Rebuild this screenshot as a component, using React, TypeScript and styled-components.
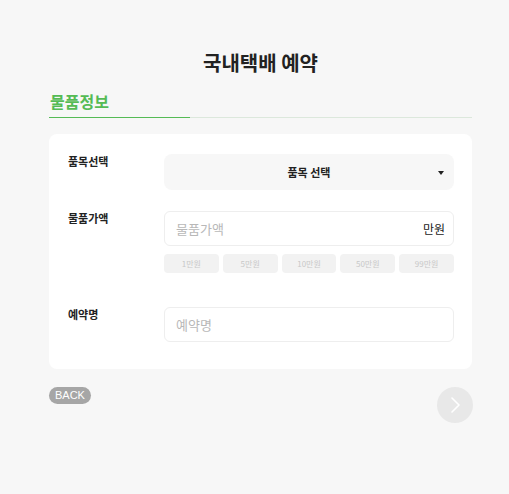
import styled, { createGlobalStyle } from "styled-components";

const GlobalStyle = createGlobalStyle`
    body {
        margin: 0;
        background: #f7f7f7;
        font-family: "Noto Sans CJK KR", "Noto Sans", sans-serif;
        color: #222;
    }
`;

const amounts = ["1만원", "5만원", "10만원", "50만원", "99만원"];

function App() {
    return (
        <>
            <GlobalStyle />
            <Page>
                <Title>국내택배 예약</Title>
                <Tabs>
                    <Tab active>물품정보</Tab>
                    <Tab />
                    <Tab />
                </Tabs>
                <Card>
                    <Row>
                        <Label>품목선택</Label>
                        <Field>
                            <Select>
                                품목 선택
                                <Caret />
                            </Select>
                        </Field>
                    </Row>
                    <Row>
                        <Label>물품가액</Label>
                        <Field>
                            <InputBox>
                                <Placeholder>물품가액</Placeholder>
                                <Unit>만원</Unit>
                            </InputBox>
                            <Chips>
                                {amounts.map((a) => (
                                    <Chip key={a}>{a}</Chip>
                                ))}
                            </Chips>
                        </Field>
                    </Row>
                    <Row spaced>
                        <Label>예약명</Label>
                        <Field>
                            <InputBox>
                                <Placeholder>예약명</Placeholder>
                            </InputBox>
                        </Field>
                    </Row>
                </Card>
                <Footer>
                    <BackButton>BACK</BackButton>
                    <NextButton>
                        <svg width="14" height="18" viewBox="0 0 14 18" fill="none">
                            <path d="M4 2l7 7-7 7" stroke="#fff" strokeWidth="1.6" strokeLinecap="round" strokeLinejoin="round" />
                        </svg>
                    </NextButton>
                </Footer>
            </Page>
        </>
    );
}

const Page = styled.div`
    width: 423px;
    padding: 48px 0 0 49px;
`;

const Title = styled.h1`
    margin: 0;
    text-align: center;
    font-size: 20px;
    font-weight: 700;
    line-height: 30px;
    color: #222;
`;

const Tabs = styled.div`
    display: flex;
    margin-top: 11px;
`;

const Tab = styled.div<{ active?: boolean }>`
    flex: 1;
    height: 28px;
    padding-left: 1px;
    font-size: 16px;
    font-weight: 700;
    line-height: 24px;
    color: #55bb55;
    border-bottom: 1px solid ${({ active }) => (active ? "#55bb55" : "#dce8dc")};
`;

const Card = styled.div`
    margin-top: 16px;
    background: #fff;
    border-radius: 8px;
    padding: 20px 18px 27px 19px;
    display: flex;
    flex-direction: column;
    gap: 21px;
`;

const Row = styled.div<{ spaced?: boolean }>`
    display: flex;
    margin-top: ${({ spaced }) => (spaced ? "13px" : "0")};
`;

const Label = styled.div`
    width: 96px;
    flex-shrink: 0;
    font-size: 11px;
    font-weight: 700;
    line-height: 14px;
    color: #222;
`;

const Field = styled.div`
    flex: 1;
    display: flex;
    flex-direction: column;
    gap: 8px;
`;

const Select = styled.div`
    position: relative;
    height: 36px;
    background: #f7f7f7;
    border-radius: 8px;
    display: flex;
    align-items: center;
    justify-content: center;
    font-size: 11px;
    font-weight: 700;
    color: #222;
`;

const Caret = styled.span`
    position: absolute;
    right: 10px;
    top: 17px;
    border-left: 3.5px solid transparent;
    border-right: 3.5px solid transparent;
    border-top: 4px solid #222;
`;

const InputBox = styled.div`
    height: 35px;
    box-sizing: border-box;
    border: 1px solid #eeeeee;
    border-radius: 6px;
    background: #fff;
    display: flex;
    align-items: center;
    justify-content: space-between;
    padding: 0 8px 0 11px;
`;

const Placeholder = styled.span`
    font-size: 13px;
    color: #b8b8b8;
`;

const Unit = styled.span`
    font-size: 12px;
    color: #222;
`;

const Chips = styled.div`
    display: grid;
    grid-template-columns: repeat(5, 1fr);
    gap: 4px;
`;

const Chip = styled.div`
    height: 19px;
    border-radius: 4px;
    background: #f2f2f2;
    display: flex;
    align-items: center;
    justify-content: center;
    font-size: 8px;
    color: #c8c8c8;
`;

const Footer = styled.div`
    display: flex;
    justify-content: space-between;
    align-items: flex-start;
    margin-top: 18px;
`;

const BackButton = styled.button`
    border: none;
    height: 17px;
    padding: 0 6px;
    border-radius: 9px;
    background: #a6a6a6;
    color: #fff;
    font-family: "Liberation Sans", Arial, sans-serif;
    font-size: 11px;
    line-height: 17px;
`;

const NextButton = styled.button`
    width: 36px;
    height: 36px;
    border: none;
    border-radius: 50%;
    background: #e8e8e8;
    display: flex;
    align-items: center;
    justify-content: center;
    padding: 0;
    margin-right: -1px;
`;

export default App;
